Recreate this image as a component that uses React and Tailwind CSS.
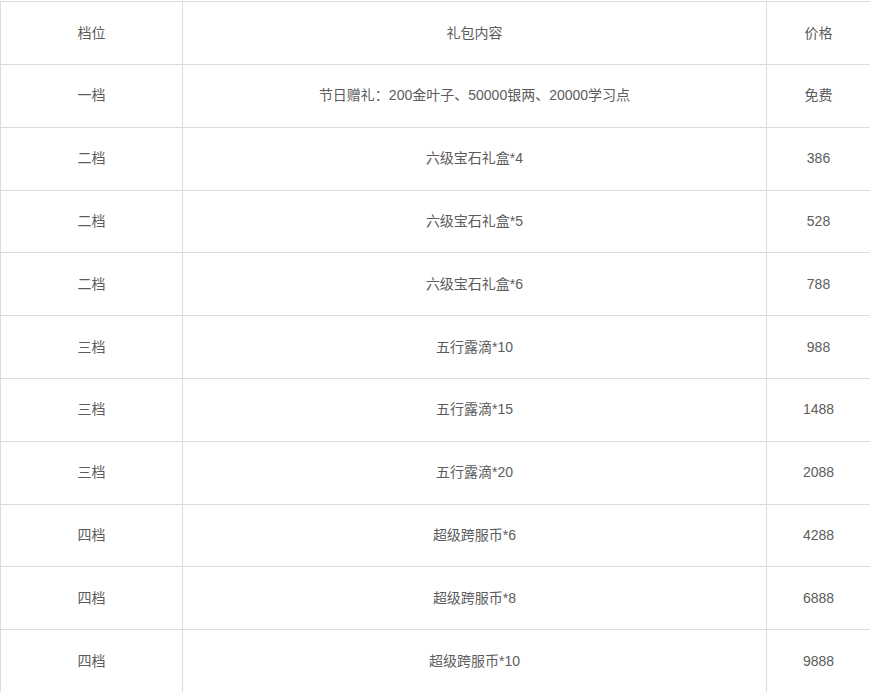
import React from 'react';

const rows = [
    ['一档', '节日赠礼：200金叶子、50000银两、20000学习点', '免费'],
    ['二档', '六级宝石礼盒*4', '386'],
    ['二档', '六级宝石礼盒*5', '528'],
    ['二档', '六级宝石礼盒*6', '788'],
    ['三档', '五行露滴*10', '988'],
    ['三档', '五行露滴*15', '1488'],
    ['三档', '五行露滴*20', '2088'],
    ['四档', '超级跨服币*6', '4288'],
    ['四档', '超级跨服币*8', '6888'],
    ['四档', '超级跨服币*10', '9888'],
];

const cell = 'border border-[#dcdcdc] text-center align-middle p-0';

const App = () => {
    return (
        <div className="bg-white pt-px w-[870px] h-[692px] overflow-hidden" style={{ fontFamily: '"Liberation Sans", "Noto Sans CJK SC", sans-serif' }}>
            <table className="border-collapse w-[870px] table-fixed text-[14px] text-[#5c5c5c]">
                <colgroup>
                    <col className="w-[182px]" />
                    <col className="w-[584px]" />
                    <col className="w-[104px]" />
                </colgroup>
                <thead>
                    <tr className="h-[63px]">
                        <th className={`${cell} font-normal`}>档位</th>
                        <th className={`${cell} font-normal`}>礼包内容</th>
                        <th className={`${cell} font-normal`}>价格</th>
                    </tr>
                </thead>
                <tbody>
                    {rows.map((r, i) => (
                        <tr key={i} className="h-[62.8px]">
                            <td className={cell}>{r[0]}</td>
                            <td className={cell}>{r[1]}</td>
                            <td className={cell}>{r[2]}</td>
                        </tr>
                    ))}
                </tbody>
            </table>
        </div>
    );
};

export default App;
